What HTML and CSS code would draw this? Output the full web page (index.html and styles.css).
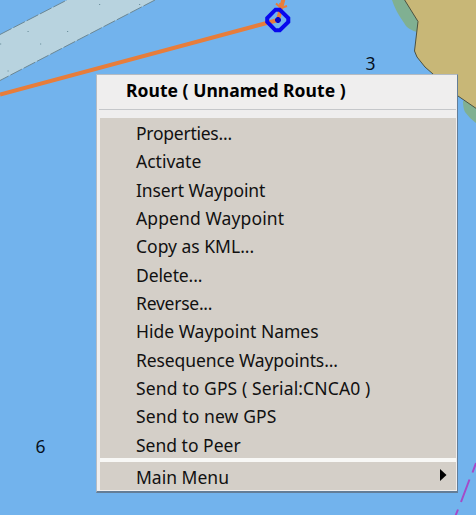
FILE: index.html
```
<!DOCTYPE html>
<html lang="en">
<head>
<meta charset="utf-8">
<title>Route menu</title>
<link rel="stylesheet" href="styles.css">
</head>
<body>
<main class="chart">
  <svg class="map" viewBox="0 0 476 515" width="476" height="515" aria-hidden="true">
    <path class="lane" d="M0 34.500 L67 0 H155 L0 80.500 Z"/>
    <path class="lane-edge" d="M0 34.500 L67 0 M155 0 L0 80.500"/>
    <path class="specks" d="M99 4.500h1.200M139 4.500h1.200M27.500 31.500h1.200M67 31.500h1.200M40 44h1.200M0 44h1.200M7.500 71h1.200"/>
    <path class="shoal" d="M392 0 C396 12 401 18 406 26 Q410 30 417 32 L424 20 L410 0 Z M463 101 Q463 108 465 112 Q470 119 476 123 V100 Z"/>
    <path class="land" d="M404 -1 L418 21.500 L414.500 51 L417 57 L425 67 L433 74 L458 96 L477 109 V-1 Z"/>
    <path class="route" d="M0 94.500 L278 20 L284 -3"/>
    <path class="arrow" d="M276 3.500 L281 8 L287 6 M278 8 L279 13 M280 3 L281 9"/>
    <path class="waypoint" d="M275.500 9.700 H279.800 L288.300 18 V22 L279.800 30.300 H275.500 L267.200 22 V18 Z"/>
    <path class="waypoint-dot" d="M277 17h2l2 2v2l-2 2h-2l-2-2v-2z"/>
    <path class="boundary" d="M476 463 L472.500 472.500 M469.500 479.500 L461 502 M458 509.500 L455 517"/>
  </svg>
  <span class="depth depth-three">3</span>
  <span class="depth depth-six">6</span>
  <nav class="menu">
    <h1 class="title">Route ( Unnamed Route )</h1>
    <ul class="items">
      <li class="tight">Properties...</li>
      <li>Activate</li>
      <li class="snug">Insert Waypoint</li>
      <li class="loose">Append Waypoint</li>
      <li>Copy as KML...</li>
      <li class="snug">Delete...</li>
      <li class="tight">Reverse...</li>
      <li>Hide Waypoint Names</li>
      <li class="snug">Resequence Waypoints...</li>
      <li class="loose">Send to GPS ( Serial:CNCA0 )</li>
      <li class="loose">Send to new GPS</li>
      <li>Send to Peer</li>
    </ul>
    <div class="submenu"><span>Main Menu</span>
      <svg width="7" height="12" viewBox="0 0 7 12" aria-hidden="true"><path d="M0 0 L6.500 6 L0 12 Z"/></svg>
    </div>
  </nav>
</main>
</body>
</html>
```
FILE: styles.css
```
body { margin: 0; font-family: "Noto Sans", sans-serif; color: #111; }
.chart { position: relative; width: 476px; height: 515px; overflow: hidden; background: #72b3ed; }
.map { display: block; }
.map path { fill: none; }
.map .lane { fill: #b8d3df; }
.map .lane-edge { stroke: #6b8794; stroke-width: 1; stroke-dasharray: 13 2; }
.map .specks { stroke: #6f929f; stroke-width: 1; }
.map .shoal { fill: #80b092; }
.map .land { fill: #c8b777; stroke: #4b5141; stroke-width: 1; }
.map .route { stroke: #e77d3b; stroke-width: 4; }
.map .arrow { stroke: #e77d3b; stroke-width: 2; }
.map .waypoint { stroke: #0808ee; stroke-width: 4; }
.map .waypoint-dot { fill: #0808c8; }
.map .boundary { stroke: #a44bc8; stroke-width: 2; }
.depth { position: absolute; font-size: 17.500px; line-height: 20px; color: #07101c; }
.depth-three { left: 365.500px; top: 53px; }
.depth-six { left: 35.500px; top: 436px; }
.menu {
  position: absolute; left: 96px; top: 74px; width: 362px; height: 419px;
  box-sizing: border-box; display: flex; flex-direction: column;
  padding: 0 1px 1px 3px; background: #efeeee;
  border: 1px solid #b4bbc3; border-right: 1px solid #637d97; border-bottom: 2px solid #637d97;
}
.title {
  margin: 0 0 8px -1px; height: 35px; box-sizing: border-box; padding-left: 27px;
  border-bottom: 1px solid #c5c7ca; font-size: 17.500px; line-height: 31px;
  letter-spacing: 0.04px; color: #000; white-space: pre;
}
.items {
  list-style: none; margin: 0; padding: 0; flex: none;
  display: grid; grid-template-rows: repeat(12, 28.350px);
  background: #d4cfc8;
}
.items li { padding-left: 36px; font-size: 17.500px; line-height: 30.500px; white-space: pre; }
.items .tight { letter-spacing: -0.25px; }
.items .snug { letter-spacing: -0.1px; }
.items .loose { letter-spacing: 0.12px; }
.submenu {
  flex: 1; display: flex; align-items: center; justify-content: space-between;
  padding: 0 9px 0 36px; background: #d4cfc8; border-top: 4px solid #f8f8f6;
  font-size: 17.500px; line-height: 28px;
}
.submenu span { position: relative; top: 1px; }
.submenu svg { margin-top: -2px; }
```
